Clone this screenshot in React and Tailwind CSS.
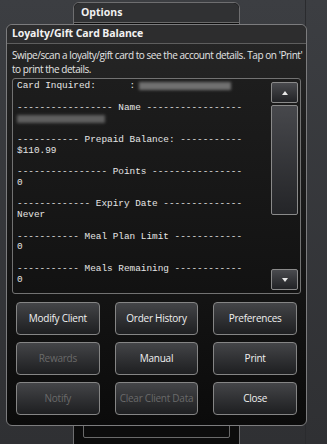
import React from 'react';

const ui = { fontFamily: '"Open Sans", "Noto Sans", sans-serif' };
const mono = { fontFamily: '"Liberation Mono", "Courier New", monospace' };

const dash = (n) => '-'.repeat(n);

const lines = [
  { kind: 'card' },
  { text: '' },
  { text: `${dash(17)} Name ${dash(17)}` },
  { kind: 'blur' },
  { text: '' },
  { text: `${dash(11)} Prepaid Balance: ${dash(11)}` },
  { text: '$110.99' },
  { text: '' },
  { text: `${dash(16)} Points ${dash(16)}` },
  { text: '0' },
  { text: '' },
  { text: `${dash(13)} Expiry Date ${dash(14)}` },
  { text: 'Never' },
  { text: '' },
  { text: `${dash(11)} Meal Plan Limit ${dash(12)}` },
  { text: '0' },
  { text: '' },
  { text: `${dash(11)} Meals Remaining ${dash(12)}` },
  { text: '0' },
];

const buttons = [
  { label: 'Modify Client' },
  { label: 'Order History' },
  { label: 'Preferences' },
  { label: 'Rewards', disabled: true },
  { label: 'Manual' },
  { label: 'Print' },
  { label: 'Notify', disabled: true },
  { label: 'Clear Client Data', disabled: true },
  { label: 'Close' },
];

function ScrollButton({ up }) {
  return (
    <div className="h-[21px] rounded-[2px] border border-[#8a8a8a] bg-gradient-to-b from-[#4a4b4f] to-[#222326] flex items-center justify-center">
      <svg width="6" height="4" viewBox="0 0 6 4">
        {up ? <path d="M0 4 L3 0 L6 4 Z" fill="#e8e8e8" /> : <path d="M0 0 L3 4 L6 0 Z" fill="#e8e8e8" />}
      </svg>
    </div>
  );
}

export default function App() {
  return (
    <div className="relative w-[327px] h-[444px] overflow-hidden bg-gradient-to-b from-[#3c3e42] to-[#2f3033]" style={ui}>
      {/* right panel edge */}
      <div className="absolute top-0 bottom-0 left-[305px] w-px bg-[#2a2b2e]" />

      {/* Options window behind */}
      <div className="absolute left-[73px] top-[2px] w-[167px] h-[460px] rounded-t-[6px] border border-[#6e6e70] bg-[#0c0c0c]">
        <div className="h-[20px] rounded-t-[6px] bg-[#303133] border-b border-[#6a6a6a] px-[7px] flex items-center text-[10.5px] font-bold text-[#f0f0f0]">
          Options
        </div>
        <div className="mx-[9px] mt-[2px] h-[413px] border border-[#6a6a6a] rounded-b-[2px]" />
      </div>

      {/* Loyalty dialog */}
      <div className="absolute left-[6px] top-[24px] w-[301px] h-[402px] rounded-[6px] border border-[#7c7c7e] bg-gradient-to-b from-[#262626] to-[#0b0b0b] flex flex-col">
        <div className="h-[19px] rounded-t-[6px] bg-[#2d2d2e] border-b border-[#5e5e5e] px-[5px] flex items-center text-[10.5px] font-bold text-[#f2f2f2] tracking-[-0.1px]">
          Loyalty/Gift Card Balance
        </div>
        <p className="pl-[5px] pt-[4px] text-[10px] leading-[14px] text-[#e4e4e4] tracking-[-0.45px] whitespace-nowrap">
          Swipe/scan a loyalty/gift card to see the account details. Tap on 'Print'
          <br />
          to print the details.
        </p>

        <div className="mx-[5px] mt-[2px] h-[216px] rounded-[3px] border border-[#727272] bg-gradient-to-b from-[#1d1d1d] to-[#121212] flex">
          <div className="flex-1 pl-[4px] pt-[2px] text-[9.4px] leading-[10.75px] text-[#e6e6e6] whitespace-pre" style={mono}>
            {lines.map((l, i) => {
              if (l.kind === 'card') {
                return (
                  <div key={i} className="flex items-center h-[10.75px]">
                    <span>{'Card Inquired:      :'}</span>
                    <span className="ml-[4px] w-[92px] h-[8px] bg-[#707070] blur-[1.5px]" />
                  </div>
                );
              }
              if (l.kind === 'blur') {
                return (
                  <div key={i} className="flex items-center h-[10.75px]">
                    <span className="w-[88px] h-[8px] bg-[#5e5e5e] blur-[1.5px]" />
                  </div>
                );
              }
              return (
                <div key={i} className="h-[10.75px]">{l.text}</div>
              );
            })}
          </div>
          <div className="w-[29px] pr-[2px] pt-[3px] pb-[3px] flex flex-col">
            <ScrollButton up />
            <div className="mt-[2px] h-[110px] rounded-[2px] border border-[#8a8a8a] bg-gradient-to-b from-[#47484c] to-[#242528]" />
            <div className="flex-1" />
            <ScrollButton />
          </div>
        </div>

        <div className="grid grid-cols-3 gap-x-[15px] gap-y-[7px] px-[9px] mt-[8px]">
          {buttons.map((b) => (
            <div
              key={b.label}
              className={`h-[33px] rounded-[4px] border border-[#858585] bg-gradient-to-b from-[#444548] to-[#1e1f21] flex items-center justify-center text-[10px] tracking-[-0.25px] whitespace-nowrap ${b.disabled ? 'text-[#6a6a6a]' : 'text-[#f0f0f0]'}`}
            >
              {b.label}
            </div>
          ))}
        </div>
      </div>
    </div>
  );
}
